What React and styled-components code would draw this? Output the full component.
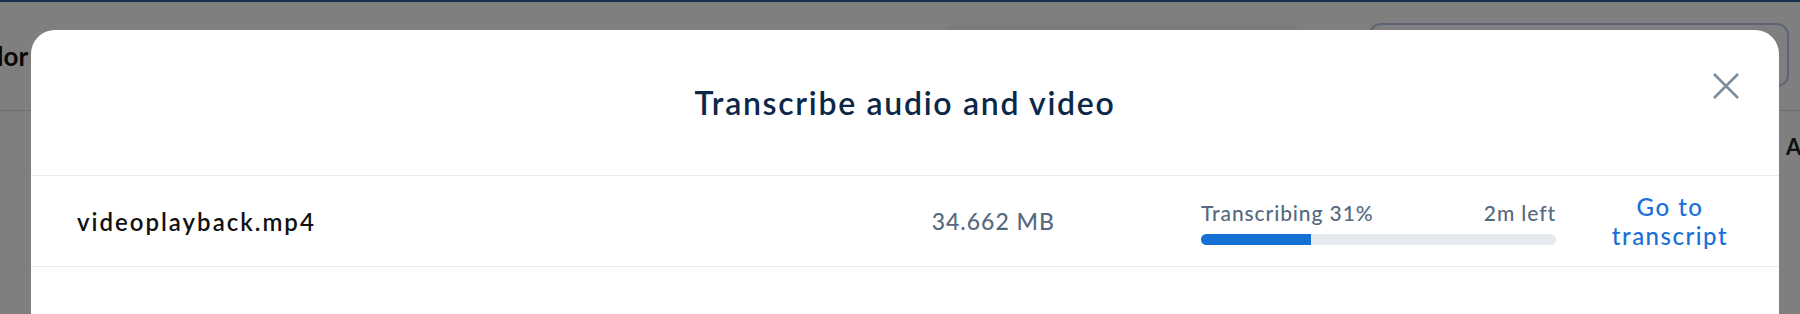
import styled, { createGlobalStyle } from "styled-components";

const GlobalStyle = createGlobalStyle`
  html, body {
    margin: 0;
    padding: 0;
    height: 314px;
    overflow: hidden;
    background: #ffffff;
    font-family: Lato, "Noto Sans", sans-serif;
  }
`;

const file = {
  name: "videoplayback.mp4",
  size: "34.662 MB",
  progress: 31,
  left: "2m left",
};

function App() {
  return (
    <>
      <GlobalStyle />
      <Page>
        <TopBar>
          <PageTitle>lor</PageTitle>
          <GhostTab />
          <SearchBox />
        </TopBar>
        <SubBar>
          <Spacer />
          <ColumnHead>A</ColumnHead>
        </SubBar>
      </Page>
      <Overlay />
      <Modal>
        <ModalHeader>
          <span />
          <Title>Transcribe audio and video</Title>
          <CloseButton aria-label="Close">
            <svg width="26" height="26" viewBox="0 0 26 26">
              <path d="M1 1 L25 25 M25 1 L1 25" stroke="#7b8d9e" strokeWidth="2.6" />
            </svg>
          </CloseButton>
        </ModalHeader>
        <FileRow>
          <FileName>{file.name}</FileName>
          <FileSize>{file.size}</FileSize>
          <Progress>
            <ProgressText>
              <span>Transcribing {file.progress}%</span>
              <span>{file.left}</span>
            </ProgressText>
            <Track>
              <Fill style={{ width: `${file.progress}%` }} />
            </Track>
          </Progress>
          <GoLink href="#">
            Go to
            <br />
            transcript
          </GoLink>
        </FileRow>
      </Modal>
    </>
  );
}

const Page = styled.div`
  border-top: 2px solid #2c5a9c;
  height: 312px;
`;

const TopBar = styled.div`
  height: 108px;
  border-bottom: 1px solid #dcdcdc;
  display: flex;
  align-items: flex-start;
`;

const PageTitle = styled.div`
  margin-top: 38px;
  margin-left: -3px;
  font-size: 26px;
  font-weight: 700;
  color: #111;
`;

const GhostTab = styled.div`
  margin-top: 23px;
  margin-left: 915px;
  width: 360px;
  height: 40px;
  background: #f5f6f8;
  border-radius: 12px 12px 0 0;
`;

const SearchBox = styled.div`
  margin-top: 21px;
  margin-left: 66px;
  width: 420px;
  height: 64px;
  border: 2px solid #b8cbe6;
  border-radius: 12px;
  box-sizing: border-box;
`;

const SubBar = styled.div`
  display: flex;
`;

const Spacer = styled.div`
  flex: 1;
`;

const ColumnHead = styled.div`
  margin-top: 22px;
  width: 14px;
  font-size: 22px;
  font-weight: 700;
  color: #222;
  overflow: hidden;
`;

const Overlay = styled.div`
  position: fixed;
  inset: 0;
  background: rgba(0, 0, 0, 0.5);
`;

const Modal = styled.div`
  position: fixed;
  top: 30px;
  left: 31px;
  width: 1748px;
  height: 420px;
  background: #ffffff;
  border-radius: 24px;
`;

const ModalHeader = styled.div`
  height: 145px;
  border-bottom: 1px solid #ececec;
  display: grid;
  grid-template-columns: 1fr auto 1fr;
  align-items: center;
`;

const Title = styled.h2`
  margin: 0;
  font-size: 32px;
  font-weight: 600;
  color: #0c2849;
  letter-spacing: 1.7px;
`;

const CloseButton = styled.button`
  justify-self: end;
  align-self: start;
  margin-top: 43px;
  margin-right: 40px;
  padding: 0;
  border: 0;
  background: none;
  display: flex;
  cursor: pointer;
`;

const FileRow = styled.div`
  height: 90px;
  border-bottom: 1px solid #ececec;
  display: flex;
  align-items: center;
  padding: 0 46px;
`;

const FileName = styled.div`
  flex: 1;
  font-size: 24px;
  font-weight: 600;
  color: #111;
  letter-spacing: 2px;
`;

const FileSize = styled.div`
  margin-right: 146px;
  font-size: 23px;
  font-weight: 500;
  color: #56697e;
  letter-spacing: 1px;
`;

const Progress = styled.div`
  width: 355px;
  margin-right: 51px;
  margin-top: 2px;
`;

const ProgressText = styled.div`
  display: flex;
  justify-content: space-between;
  font-size: 21px;
  line-height: 26px;
  font-weight: 500;
  color: #56697e;
  letter-spacing: 0.9px;
`;

const Track = styled.div`
  margin-top: 8px;
  height: 11px;
  border-radius: 6px;
  background: #e6e9ed;
  overflow: hidden;
`;

const Fill = styled.div`
  height: 100%;
  background: #1570d6;
`;

const GoLink = styled.a`
  width: 126px;
  text-align: center;
  font-size: 24px;
  line-height: 29px;
  font-weight: 500;
  color: #1a6fd8;
  text-decoration: none;
  letter-spacing: 1.5px;
`;

export default App;
